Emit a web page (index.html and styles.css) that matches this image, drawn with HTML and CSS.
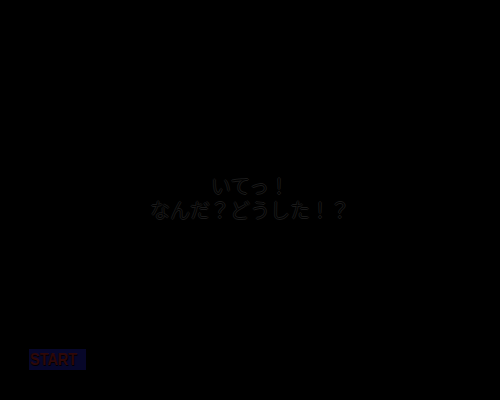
FILE: index.html
```html
<!DOCTYPE html>
<html lang="ja">
<head>
<meta charset="utf-8">
<link rel="stylesheet" href="styles.css">
</head>
<body>
<div class="screen">
  <div class="message">
    <p class="line">いてっ！</p>
    <p class="line">なんだ？どうした！？</p>
  </div>
  <div class="footer">
    <div class="start"><span class="start-label">START</span></div>
  </div>
</div>
</body>
</html>
```

FILE: styles.css
```css
html, body {
  margin: 0;
  padding: 0;
  background: #000;
}
.screen {
  width: 500px;
  height: 400px;
  display: flex;
  flex-direction: column;
  background: #000;
}
.message {
  flex: 1;
  display: flex;
  flex-direction: column;
  align-items: center;
  justify-content: center;
  padding-top: 46px;
}
.line {
  margin: 0;
  font-family: "Noto Sans CJK JP", sans-serif;
  font-weight: 300;
  font-size: 20px;
  line-height: 24px;
  color: #000;
  text-shadow: 1px 0 0 #1a1a1a, -1px 0 0 #1a1a1a, 0 1px 0 #1a1a1a, 0 -1px 0 #1a1a1a;
}
.footer {
  height: 51px;
  padding-left: 29px;
}
.start {
  width: 57px;
  height: 21px;
  background: #07072a;
  overflow: hidden;
}
.start-label {
  display: inline-block;
  font-family: "Liberation Sans", sans-serif;
  font-weight: bold;
  font-size: 17px;
  line-height: 22px;
  color: #2e0808;
  margin-left: 1px;
  transform: scaleX(0.85);
  transform-origin: left center;
  text-shadow: 1px 1px 0 #000;
}
```
